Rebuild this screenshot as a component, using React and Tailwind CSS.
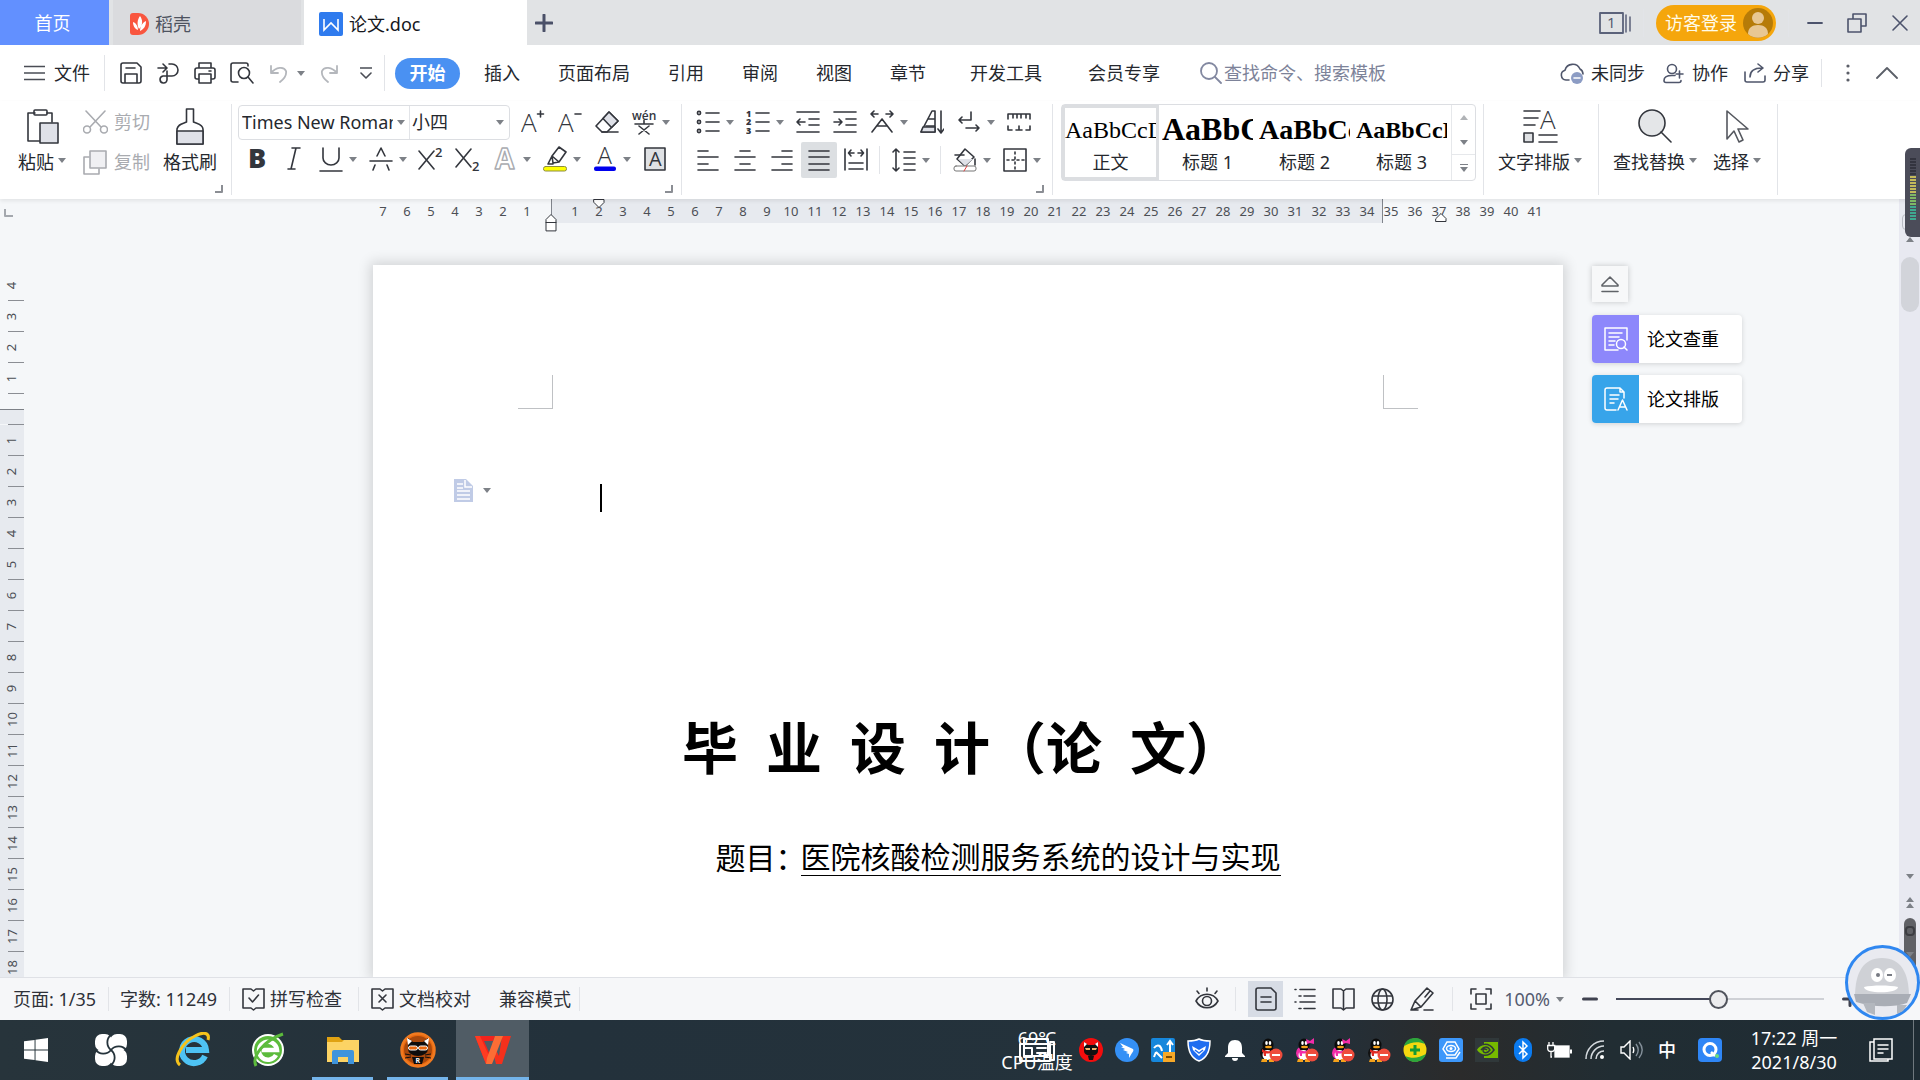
import React from "react";

const INK = "#33363d";

function Svg({ w = 24, h = 24, vb, className = "", children, stroke = INK, sw = 1.6 }) {
  return (
    <svg
      width={w}
      height={h}
      viewBox={vb || `0 0 ${w} ${h}`}
      fill="none"
      stroke={stroke}
      strokeWidth={sw}
      strokeLinecap="round"
      strokeLinejoin="round"
      className={`shrink-0 ${className}`}
      aria-hidden="true"
    >
      {children}
    </svg>
  );
}

function T({ x, y, size = 24, weight = 300, fill = INK, children, ...rest }) {
  return (
    <text x={x} y={y} fontSize={size} fontWeight={weight} fill={fill} stroke="none" fontFamily="'Open Sans','Noto Sans CJK SC',sans-serif" {...rest}>
      {children}
    </text>
  );
}

function Caret({ className = "" }) {
  return (
    <svg width="8" height="5" viewBox="0 0 8 5" className={`shrink-0 ${className}`} aria-hidden="true">
      <path d="M0 0h8L4 5z" fill="#7d8187" />
    </svg>
  );
}

function Tool({ label, caret, active, children }) {
  return (
    <button
      type="button"
      aria-label={label}
      className={caret ? "flex h-9 w-[50px] shrink-0 items-center" : "flex h-9 w-[37px] shrink-0 items-center justify-center"}
    >
      {caret ? (
        <>
          <span className="flex w-[37px] justify-center">{children}</span>
          <Caret />
        </>
      ) : (
        <span className={active ? "flex h-9 w-9 items-center justify-center rounded-xs bg-[#dcdfe2]" : "flex"}>{children}</span>
      )}
    </button>
  );
}

function Big({ label, caret, className = "", children }) {
  return (
    <button type="button" className={`flex shrink-0 flex-col items-center ${className}`}>
      <span className="flex h-11 items-center">{children}</span>
      <span className="flex h-7 items-center gap-1 text-lg">
        {label}
        {caret && <Caret className="-mt-1" />}
      </span>
    </button>
  );
}

function Corner() {
  return (
    <Svg w={8} h={8} stroke="#8b8e94" sw={2} className="absolute right-2 bottom-0.5">
      <path d="M7 0v7H0" />
    </Svg>
  );
}

const Sep = ({ className = "" }) => <span className={`w-px shrink-0 bg-[#e2e4e8] ${className}`} />;

/* ---------- title bar ---------- */
function TitleBar() {
  return (
    <header className="flex h-[45px] shrink-0 items-stretch bg-[#e1e3e5] text-lg">
      <button type="button" className="w-[109px] bg-[#6290ff] pr-1 text-white">首页</button>
      <button type="button" className="ml-1 flex w-[188px] items-center gap-1.5 bg-[#dadbde] pt-0.5 pl-[17px] text-[#4e535f]">
        <svg width="19" height="22" viewBox="0 0 19 22" aria-hidden="true">
          <path d="M3 0h5a11 11 0 0 1 0 22H3a3 3 0 0 1-3-3V3a3 3 0 0 1 3-3z" fill="#f9563f" />
          <path d="M10 3c3 4 3 9-1 13-2-4-2-9 1-13zM3 9c3 1 5 4 5 8-3-1-5-4-5-8zM16 8c0 5-2 8-6 10 0-4 2-8 6-10z" fill="#fff" />
        </svg>
        稻壳
      </button>
      <button type="button" className="ml-[3px] flex w-[223px] items-center gap-1.5 bg-white pt-0.5 pl-[15px] text-[#16181d]">
        <svg width="24" height="24" viewBox="0 0 24 24" aria-hidden="true">
          <rect width="24" height="24" rx="2" fill="#2f7bee" />
          <path d="M5 7v11l7-7 7 7V7" fill="none" stroke="#fff" strokeWidth="1.6" />
        </svg>
        论文.doc
      </button>
      <button type="button" aria-label="新建标签" className="flex w-[34px] items-center justify-center">
        <Svg w={18} h={18} stroke="#4a5068" sw={3}><path d="M9 1v16M1 9h16" /></Svg>
      </button>
      <div className="ml-auto flex items-center">
        <button type="button" aria-label="窗口列表">
          <Svg w={32} h={22} stroke="#5b627a" sw={1.8}>
            <rect x="1" y="1" width="23" height="20" />
            <path d="M27 3v17M31 5v14" strokeWidth="1.5" />
            <T x={8} y={16} size={15} weight={400} fill="#4f566b">1</T>
          </Svg>
        </button>
        <Sep className="ml-3 h-7 bg-[#cccfd4]" />
        <button type="button" className="ml-3 flex h-9 items-center gap-1.5 rounded-full bg-[#f5a60c] pr-[3px] pl-[9px] text-[#fffbe8]">
          访客登录
          <svg width="30" height="30" viewBox="0 0 30 30" aria-hidden="true">
            <circle cx="15" cy="15" r="15" fill="#b67b08" />
            <circle cx="15" cy="10" r="6" fill="#e8c793" />
            <path d="M5 26c0-6 4-9 10-9s10 3 10 9a15 15 0 0 1-20 0z" fill="#e8c793" />
          </svg>
        </button>
        <Sep className="ml-3 h-7 bg-[#cccfd4]" />
        <button type="button" aria-label="最小化" className="ml-4 flex w-5 justify-center">
          <Svg w={16} h={16} stroke="#4c536c" sw={1.8}><path d="M1 8h14" /></Svg>
        </button>
        <button type="button" aria-label="还原" className="ml-[22px]">
          <Svg w={20} h={20} stroke="#4c536c" sw={1.6}><path d="M1 6h13v13H1zM6 6V1h13v12h-5" /></Svg>
        </button>
        <button type="button" aria-label="关闭" className="mr-[11px] ml-6">
          <Svg w={18} h={18} stroke="#4c536c" sw={1.6}><path d="M2 2l14 14M16 2L2 16" /></Svg>
        </button>
      </div>
    </header>
  );
}

/* ---------- menu row ---------- */
function MenuRow() {
  return (
    <nav className="flex h-14 shrink-0 items-center bg-white pl-6 text-lg whitespace-nowrap">
      <button type="button" className="flex items-center gap-[9px]">
        <Svg w={21} h={16} stroke="#4a4d55"><path d="M0 1.500h21M0 8h21M0 14.500h21" strokeLinecap="butt" /></Svg>
        文件
      </button>
      <Sep className="ml-3.5 h-9" />
      <div className="ml-[7px] flex items-center">
        <Tool label="保存">
          <Svg w={22} h={22}><path d="M1 3a2 2 0 0 1 2-2h14l4 4v14a2 2 0 0 1-2 2H3a2 2 0 0 1-2-2zM5 21v-9h12v9M6 6h9" /></Svg>
        </Tool>
        <Tool label="输出">
          <Svg w={22} h={22}><path d="M1 6h8M6 2l4 4-4 4M12 2h3a6 6 0 0 1 0 12H6a3.500 3.500 0 1 0 4 4V9" /></Svg>
        </Tool>
        <Tool label="打印">
          <Svg w={22} h={22}><path d="M5 6V1h12v5M5 17H3a2 2 0 0 1-2-2V8a2 2 0 0 1 2-2h16a2 2 0 0 1 2 2v7a2 2 0 0 1-2 2h-2M5 12h12v9H5zM15 9h2" /></Svg>
        </Tool>
        <Tool label="打印预览">
          <Svg w={24} h={22}><path d="M8 20H3a2 2 0 0 1-2-2V3a2 2 0 0 1 2-2h13a2 2 0 0 1 2 2v1M18 15l5 6" /><circle cx="14" cy="11" r="5.500" /></Svg>
        </Tool>
        <Tool label="撤销" caret>
          <Svg w={18} h={20} stroke="#b4b7bc" sw={1.8}><path d="M1 3v7h7M1 10C6 4 14 3 16 8c1 5-2 8-6 11" /></Svg>
        </Tool>
        <Tool label="恢复">
          <Svg w={18} h={20} stroke="#b4b7bc" sw={1.8}><path d="M17 3v7h-7M17 10C12 4 4 3 2 8c-1 5 2 8 6 11" /></Svg>
        </Tool>
        <Tool label="更多">
          <Svg w={12} h={14} stroke="#4a4d55"><path d="M0.500 2h11M1 7l5 5 5-5" /></Svg>
        </Tool>
      </div>
      <Sep className="h-9" />
      <button type="button" className="ml-2.5 h-[31px] w-[65px] rounded-full bg-[#4a91f2] font-bold text-white">开始</button>
      <div className="ml-6 flex gap-[38px] text-[#25282e]">
        <button type="button">插入</button>
        <button type="button">页面布局</button>
        <button type="button">引用</button>
        <button type="button">审阅</button>
        <button type="button">视图</button>
        <button type="button">章节</button>
        <button type="button" className="ml-1.5">开发工具</button>
        <button type="button" className="ml-2">会员专享</button>
      </div>
      <label className="ml-10 flex items-center gap-0.5">
        <Svg w={22} h={22} stroke="#8288a0" sw={1.8}><circle cx="9" cy="9" r="8" /><path d="M15 15l6 6" /></Svg>
        <input type="text" aria-label="查找命令" placeholder="查找命令、搜索模板" className="w-44 bg-transparent outline-none placeholder:text-[#7d8399] placeholder:opacity-100" />
      </label>
      <div className="ml-auto flex items-center text-[#25282e]">
        <button type="button" className="flex items-center gap-1.5">
          <Svg w={25} h={22} stroke="#4f566b">
            <path d="M9 18H6a5 5 0 0 1-1-9.800A8 8 0 0 1 20 7a6 6 0 0 1 3 5" />
            <circle cx="17" cy="16" r="6" fill="#8c9cc4" stroke="none" />
            <path d="M14 16h6" stroke="#fff" />
          </Svg>
          未同步
        </button>
        <button type="button" className="ml-[18px] flex items-center gap-2">
          <Svg w={21} h={21} stroke="#4f566b"><circle cx="9" cy="6" r="4.500" /><path d="M13 19.500H3a2 2 0 0 1-2-2c0-4 3-5 8-5h3M13 11h7M16.500 8v7M13 19.500h3c1 0 2-1 2-2" /></Svg>
          协作
        </button>
        <button type="button" className="ml-4 flex items-center gap-[7px]">
          <Svg w={22} h={20} stroke="#4f566b"><path d="M1 9v8a2 2 0 0 0 2 2h16a2 2 0 0 0 2-2v-4M6 14c0-6 4-9 12-9M14 1l5 4-5 4" /></Svg>
          分享
        </button>
        <Sep className="ml-3 h-7" />
        <button type="button" aria-label="更多选项" className="ml-6">
          <svg width="4" height="20" viewBox="0 0 4 20" fill="#5b5f68"><circle cx="2" cy="3" r="1.600" /><circle cx="2" cy="10" r="1.600" /><circle cx="2" cy="17" r="1.600" /></svg>
        </button>
        <button type="button" aria-label="折叠功能区" className="mr-[22px] ml-[26px]">
          <Svg w={22} h={12} stroke="#5b5f68" sw={1.8}><path d="M1 11L11 1l10 10" /></Svg>
        </button>
      </div>
    </nav>
  );
}

/* ---------- ribbon ---------- */
function Lines({ rows, children, w = 24 }) {
  return (
    <Svg w={w} h={24}>
      {rows.map(([a, b, y], i) => (
        <path key={i} d={`M${a} ${y}H${b}`} />
      ))}
      {children}
    </Svg>
  );
}

const styleCells = [
  { name: "标题 1", cls: "text-[32px]" },
  { name: "标题 2", cls: "text-[28px]" },
  { name: "标题 3", cls: "text-2xl" },
];

function Ribbon() {
  return (
    <section className="relative z-10 flex h-[98px] shrink-0 items-stretch bg-white pt-[3px] pb-1 text-lg whitespace-nowrap text-[#25282e] shadow-[0_2px_4px_rgba(0,0,0,0.08)]">
      <div className="relative flex w-[231px] shrink-0 pl-[18px]">
        <Big label="粘贴" caret>
          <Svg w={32} h={35} className="ml-0.5">
            <path d="M8 4H1v28h12M20 4h5v9" />
            <rect x="7" y="1" width="13" height="5" rx="1" />
            <rect x="13" y="14" width="18" height="20" fill="#dfe1e8" />
          </Svg>
        </Big>
        <div className="ml-[17px] flex flex-col text-[#a9abb0]">
          <button type="button" className="flex h-9 items-center gap-1.5">
            <Svg w={25} h={24} stroke="#a9abb0"><path d="M3 1l15 16M22 1L7 17" /><circle cx="4" cy="19.500" r="3.500" /><circle cx="21" cy="19.500" r="3.500" /></Svg>
            剪切
          </button>
          <button type="button" className="mt-0.5 flex h-10 items-center gap-1.5">
            <Svg w={25} h={25} stroke="#a9abb0"><path d="M6 7H1v17h15v-5" /><rect x="7" y="1" width="16" height="17" fill="#f0f0f3" /></Svg>
            复制
          </button>
        </div>
        <Big label="格式刷" className="ml-[13px]">
          <Svg w={28} h={37}><path d="M10.500 1h7v13c4 2 9 2 9.500 7v15H1V21c1-5 5-5 9.500-7z" /><path d="M1 23h26v13H1z" fill="#dfe1e8" /></Svg>
        </Big>
        <Corner />
      </div>
      <Sep />
      <div className="relative flex w-[449px] shrink-0 flex-col pl-1.5">
        <div className="flex items-center">
          <div className="flex h-[35px] w-[272px] items-center rounded-sm border border-[#dcdee2]">
            <select aria-label="字体" className="w-[154px] appearance-none overflow-hidden bg-transparent pl-[3px] outline-none">
              <option>Times New Roman</option>
            </select>
            <Caret className="ml-1" />
            <Sep className="ml-1 h-full" />
            <select aria-label="字号" className="ml-0.5 w-[82px] appearance-none bg-transparent outline-none">
              <option>小四</option>
            </select>
            <Caret className="ml-0.5" />
          </div>
          <div className="ml-1 flex">
            <Tool label="增大字号"><Svg w={24} h={26}><T x={0} y={23} size={26}>A</T><path d="M16.500 5h6M19.500 2v6" /></Svg></Tool>
            <Tool label="减小字号"><Svg w={24} h={26}><T x={0} y={23} size={26}>A</T><path d="M17 5h6" /></Svg></Tool>
            <Tool label="清除格式">
              <Svg w={24} h={24}><path d="M1 16L14 2l9 9-11 11H7z" /><path d="M8 8.500L14 2l9 9-6.500 6.500z" fill="#dfe1e8" /><path d="M7 22h16" /></Svg>
            </Tool>
            <Tool label="拼音指南" caret>
              <Svg w={26} h={26}><T x={1} y={11} size={12} weight={600}>wén</T><path d="M13 11.500v3M4 15h18M8 17l10 8M18 17L8 25" /></Svg>
            </Tool>
          </div>
        </div>
        <div className="mt-px flex">
          <Tool label="加粗"><Svg w={20} h={24}><T x={1} y={21} size={27} weight={800}>B</T></Svg></Tool>
          <Tool label="倾斜"><Svg w={20} h={24}><path d="M8 1h8M4 22h7M12 1L7 22" /></Svg></Tool>
          <Tool label="下划线" caret><Svg w={24} h={25}><path d="M4 1v10a8 7 0 0 0 16 0V1M1 24h22" /></Svg></Tool>
          <Tool label="删除线" caret><Svg w={24} h={25}><path d="M8 9l4-8 4 8M1 14h22M6 18l-2 5M18 18l2 5" /></Svg></Tool>
          <Tool label="上标"><Svg w={26} h={24}><path d="M1 4l15 18M16 4L1 22" /><T x={17} y={10} size={13} weight={600}>2</T></Svg></Tool>
          <Tool label="下标"><Svg w={26} h={24}><path d="M1 2l15 18M16 2L1 20" /><T x={17} y={24} size={13} weight={600}>2</T></Svg></Tool>
          <Tool label="文字效果" caret>
            <Svg w={22} h={24}>
              <text x="1" y="22" fontSize="28" fontWeight="700" fontFamily="'Open Sans',sans-serif" fill="#fff" stroke="#a9abb0" strokeWidth="1.400">A</text>
            </Svg>
          </Tool>
          <Tool label="突出显示" caret>
            <Svg w={24} h={26}><path d="M9 10l7-9 7 5-7 10-6 1zM9 10l-4 8h5M9 10l7 6" /><rect x="0.500" y="20.500" width="23" height="4.500" rx="2" fill="#ffff00" stroke="#8c8c40" strokeWidth="1" /></Svg>
          </Tool>
          <Tool label="字体颜色" caret>
            <Svg w={24} h={26}><T x={4.500} y={18} size={24}>A</T><rect x="1" y="20.500" width="22" height="4.500" rx="2" fill="#0000ee" stroke="none" /></Svg>
          </Tool>
          <Tool label="字符底纹"><Svg w={22} h={24}><rect x="1" y="1" width="20" height="22" fill="#dfe1e4" /><T x={5} y={19} size={20} weight={400}>A</T></Svg></Tool>
        </div>
        <Corner />
      </div>
      <Sep />
      <div className="relative flex w-[370px] shrink-0 flex-col pl-[7px]">
        <div className="flex">
          <Tool label="项目符号" caret>
            <Lines rows={[[10, 23, 3], [10, 23, 12], [10, 23, 21]]}><circle cx="3" cy="3" r="1.600" /><circle cx="3" cy="12" r="1.600" /><circle cx="3" cy="21" r="1.600" /></Lines>
          </Tool>
          <Tool label="编号" caret>
            <Lines rows={[[10, 23, 3], [10, 23, 12], [10, 23, 21]]}><T x={0} y={7} size={9} weight={800}>1</T><T x={0} y={15} size={9} weight={800}>2</T><T x={0} y={24} size={9} weight={800}>3</T></Lines>
          </Tool>
          <Tool label="减少缩进"><Lines rows={[[1, 23, 2], [13, 23, 9], [13, 23, 15], [1, 23, 22]]}><path d="M1 12h8M4 9l-3 3 3 3" /></Lines></Tool>
          <Tool label="增加缩进"><Lines rows={[[1, 23, 2], [13, 23, 9], [13, 23, 15], [1, 23, 22]]}><path d="M1 12h8M6 9l3 3-3 3" /></Lines></Tool>
          <Tool label="中文版式" caret><Svg w={26} h={24}><path d="M3 22L13 9l10 13M8 16h10M2 4h7M5 1L2 4l3 3M24 4h-7M21 1l3 3-3 3" /></Svg></Tool>
          <Tool label="排序"><Svg w={24} h={24}><path d="M1 22L12 1h3v21zM6 16h9M8 9h7" /><path d="M3 17h12v5H1z" fill="#dfe1e8" /><path d="M21 1v21M18 19l3 4 3-4" /></Svg></Tool>
          <Tool label="显示标记" caret><Svg w={22} h={22}><path d="M13 1v8H1M4 6L1 9l3 3M8 17h13M18 14l3 3-3 3" /></Svg></Tool>
          <Tool label="标尺"><Svg w={24} h={18}><path d="M1 6V1h22v5M6 1v4M10 1v4M14 1v4M19 1v4M1 13v4h4M23 13v4h-4M9 17h6M12 13v4" /></Svg></Tool>
        </div>
        <div className="mt-0.5 flex items-center">
          <Tool label="左对齐"><Lines rows={[[2, 12, 3], [2, 22, 9], [2, 12, 16], [2, 22, 22]]} /></Tool>
          <Tool label="居中"><Lines rows={[[7, 17, 3], [2, 22, 9], [7, 17, 16], [2, 22, 22]]} /></Tool>
          <Tool label="右对齐"><Lines rows={[[12, 22, 3], [2, 22, 9], [12, 22, 16], [2, 22, 22]]} /></Tool>
          <Tool label="两端对齐" active><Lines rows={[[2, 22, 3], [2, 22, 9], [2, 22, 16], [2, 22, 22]]} /></Tool>
          <Tool label="分散对齐"><Lines rows={[[5, 19, 15], [5, 19, 21]]}><path d="M1 1v21M23 1v21M5 5h5M7 2L4.500 5 7 8M19 5h-5M17 2l2.500 3L17 8" /></Lines></Tool>
          <Sep className="mx-[5px] h-7" />
          <Tool label="行距" caret><Lines rows={[[12, 23, 4], [12, 23, 10], [12, 23, 16], [12, 23, 22]]}><path d="M4 1v22M1 4l3-3 3 3M1 20l3 3 3-3" /></Lines></Tool>
          <Sep className="mx-[5px] h-7" />
          <Tool label="底纹颜色" caret>
            <Svg w={24} h={24}><path d="M4 11L12 1l9 8-9 9z" /><path d="M5 11h15l-8 7z" fill="#dfe1e8" stroke="none" /><path d="M2 7h9M22 11v6" /><rect x="1" y="18" width="22" height="5" rx="2" fill="#fff" stroke="#777" strokeWidth="1" /><path d="M11 23l3-5" stroke="#e04040" strokeWidth="1" /></Svg>
          </Tool>
          <Tool label="边框" caret><Svg w={24} h={24}><rect x="1" y="1" width="22" height="22" /><path d="M12 4v17M4 12h17" strokeDasharray="2 3" /></Svg></Tool>
        </div>
        <Corner />
      </div>
      <Sep />
      <div className="ml-2 flex h-[77px] w-[415px] shrink-0 rounded-sm border border-[#dcdee2]">
        <button type="button" className="flex w-[97px] flex-col items-center overflow-hidden border-[3px] border-[#dcdee1]">
          <span className="flex h-11 w-full items-center overflow-hidden font-['Liberation_Serif'] text-2xl text-black">AaBbCcDd</span>
          <span className="-mt-1 text-lg">正文</span>
        </button>
        {styleCells.map((s) => (
          <button type="button" key={s.name} className="flex w-[97px] flex-col items-center px-[3px] pt-[3px]">
            <span className={`flex h-11 w-full items-center overflow-hidden font-['Liberation_Serif'] font-bold text-black ${s.cls}`}>AaBbCcDd</span>
            <span className="-mt-1 text-lg">{s.name}</span>
          </button>
        ))}
        <div className="ml-auto flex w-6 flex-col border-l border-[#e6e8eb]">
          <button type="button" aria-label="上一行" className="flex flex-1 items-center justify-center"><Caret className="rotate-180 opacity-60" /></button>
          <button type="button" aria-label="下一行" className="flex flex-1 items-center justify-center"><Caret /></button>
          <button type="button" aria-label="更多样式" className="flex flex-1 flex-col items-center justify-center gap-0.5 border-t border-[#e6e8eb]">
            <span className="h-px w-2 bg-[#7d8187]" />
            <Caret />
          </button>
        </div>
      </div>
      <Sep className="ml-[7px]" />
      <Big label="文字排版" caret className="ml-3.5">
        <Svg w={35} h={34}><path d="M1 2h16M1 9h14M1 16h11M16 26h18M16 33h18" /><path d="M1 24h9v9H1z" fill="#dfe1e4" /><T x={17} y={20} size={26}>A</T></Svg>
      </Big>
      <Sep className="ml-4" />
      <Big label="查找替换" caret className="ml-3.5">
        <Svg w={34} h={34}><circle cx="14" cy="14" r="13" fill="#e4e6e8" /><path d="M23 23l10 10" /></Svg>
      </Big>
      <Big label="选择" caret className="ml-4">
        <Svg w={24} h={34} stroke="#55585f"><path d="M2 2v28l7-8 5 11 4-2-5-11h10z" /></Svg>
      </Big>
      <Sep className="ml-4" />
    </section>
  );
}

/* ---------- rulers ---------- */
const hMarks = Array.from({ length: 49 }, (_, i) => i - 7);
const vMarks = [4, 3, 2, 1, 0, ...Array.from({ length: 18 }, (_, i) => i + 1)];

function HRuler() {
  return (
    <div className="flex h-[45px] shrink-0 items-start pr-[21px] pl-1">
      <Svg w={9} h={9} stroke="#a4a8ae" sw={2} className="mt-2.5"><path d="M1 0v7h8" /></Svg>
      <div className="flex flex-1 justify-center pl-1.5">
        <div className="relative flex h-6">
          <div className="absolute inset-y-0 left-[180px] w-[832px] border-x border-[#80848c] bg-[#e7eaef]" />
          {hMarks.map((n) => (
            <span key={n} className="relative flex w-6 items-center justify-center pt-0.5 text-[13px] text-[#4c4f55]">{n === 0 ? "" : Math.abs(n)}</span>
          ))}
          <Svg w={12} h={18} sw={1} stroke="#33363d" className="absolute top-[15px] left-[174px]"><path d="M1 16.500v-11l5-5 5 5v11zM1 8.500h10" fill="#fff" /></Svg>
          <Svg w={12} h={10} sw={1} stroke="#33363d" className="absolute top-0 left-[222px]"><path d="M1 0.500h10v3l-5 5-5-5z" fill="#fff" /></Svg>
          <Svg w={12} h={10} sw={1} stroke="#33363d" className="absolute top-[14px] left-[1064px]"><path d="M1 8.500h10v-3l-5-5-5 5z" fill="#fff" /></Svg>
        </div>
      </div>
    </div>
  );
}

function VRuler() {
  return (
    <div className="w-6 overflow-hidden pt-[26px]">
      {vMarks.map((n, i) => (
        <div key={i} className={i > 4 ? "flex h-[31px] flex-col items-end bg-[#e7eaef]" : "flex h-[31px] flex-col items-end"}>
          {n === 0 ? (
            <span className="mt-[15px] h-[15px] w-full border-t border-[#7d8187] bg-[#e7eaef]" />
          ) : (
            <span className="flex h-[30px] w-6 items-center justify-center">
              <span className="-rotate-90 text-[13px] leading-none text-[#4c4f55]">{n}</span>
            </span>
          )}
          <span className="h-px w-4 shrink-0 bg-[#8b8e94]" />
        </div>
      ))}
    </div>
  );
}

/* ---------- document ---------- */
function Document() {
  return (
    <article className="mt-[21px] overflow-hidden bg-white text-black shadow-[0_0_12px_3px_rgba(0,0,0,0.14)]">
      <div className="flex justify-between px-[145px] pt-[110px]">
        <span className="h-[34px] w-[35px] border-r border-b border-[#bfc1c4]" />
        <span className="h-[34px] w-[35px] border-b border-l border-[#bfc1c4]" />
      </div>
      <div className="mt-[63px] flex h-9 items-center pl-[81px]">
        <button type="button" aria-label="段落选项" className="flex items-center gap-2.5">
          <svg width="19" height="23" viewBox="0 0 19 23" aria-hidden="true">
            <path d="M0 0h12l7 7v16H0z" fill="#c0cbe6" />
            <path d="M3 5h6M3 9h6M3 12h13M3 16h13M3 20h13M11 1v7h7" stroke="#fff" strokeWidth="1.500" fill="none" />
          </svg>
          <Caret />
        </button>
        <span className="mt-4 ml-[109px] h-7 w-0.5 bg-black" />
      </div>
      <h1 className="mt-[197px] flex justify-center gap-7 pr-3 text-[56px] leading-[84px] font-bold">
        <span>毕</span>
        <span>业</span>
        <span>设</span>
        <span>计（论</span>
        <span>文）</span>
      </h1>
      <p className="mt-[51px] flex justify-center pb-40 pl-[60px] text-[30px] leading-9">
        <span>题目</span>
        <span className="w-[25px]">：</span>
        <span className="h-[36px] border-b border-black leading-[34px]">医院核酸检测服务系统的设计与实现</span>
      </p>
    </article>
  );
}

function SideTools() {
  return (
    <aside className="flex flex-col items-start pt-[22px] pl-[29px] text-lg text-black">
      <button type="button" aria-label="收起" className="flex h-9 w-9 items-center justify-center bg-[#f7f8f9] shadow-[0_0_6px_rgba(0,0,0,0.2)]">
        <Svg w={18} h={18} stroke="#606368"><path d="M1 10l8-8 8 8v1H1zM1 16.500h16" /></Svg>
      </button>
      <button type="button" className="mt-[13px] flex h-12 w-[150px] items-center overflow-hidden rounded bg-white shadow-[0_1px_5px_rgba(0,0,0,0.15)]">
        <span className="flex h-full w-[47px] items-center justify-center bg-[#8d87fb]">
          <Svg w={24} h={24} stroke="#fff" sw={1.5}><path d="M14 23H1V1h22v12M5 6h13M5 10h10M5 14h6M5 18h5M20 20l3 3" /><circle cx="17" cy="17" r="4.500" /></Svg>
        </span>
        <span className="pl-2">论文查重</span>
      </button>
      <button type="button" className="mt-3 flex h-12 w-[150px] items-center overflow-hidden rounded bg-white shadow-[0_1px_5px_rgba(0,0,0,0.15)]">
        <span className="flex h-full w-[47px] items-center justify-center bg-[#37a4ea]">
          <Svg w={24} h={24} stroke="#fff" sw={1.5}><path d="M12 23H3a2 2 0 0 1-2-2V3a2 2 0 0 1 2-2h13l4 4v6M16 1v4h4M6 8h9M6 12h8M6 16h4" /><path d="M14 23l4.500-10L23 23M15.500 20h6" /></Svg>
        </span>
        <span className="pl-2">论文排版</span>
      </button>
    </aside>
  );
}

function ScrollBar() {
  return (
    <div className="-mt-[45px] flex flex-col items-center bg-[#e8e9f1]">
      <span className="mt-[15px] h-4 w-4 rounded-sm border border-[#b9bcc4]" />
      <Caret className="mt-[7px] rotate-180" />
      <span className="mt-[15px] h-[55px] w-[18px] rounded-full bg-[#d2d4da]" />
      <Caret className="mt-auto" />
      <Caret className="mt-[18px] rotate-180" />
      <Caret className="mt-px rotate-180" />
      <span className="mt-2.5 flex h-[59px] w-3 flex-col items-center rounded-t-md bg-[#606166] pt-2">
        <span className="h-2.5 w-2.5 rounded-sm border-2 border-[#3c3d42]" />
        <Caret className="mt-4" />
      </span>
    </div>
  );
}

/* ---------- status bar ---------- */
const bookPath = "M1 1h8l2.500 2L14 1h8v19h-8l-2.500 2L9 20H1z";

function StatusBar() {
  return (
    <footer className="flex h-[43px] shrink-0 items-center border-t border-[#dfe1e6] bg-[#f6f7f9] pl-[13px] text-lg whitespace-nowrap text-[#2e3138]">
      <button type="button" className="w-[95px] text-left">页面: 1/35</button>
      <Sep className="h-6" />
      <button type="button" className="ml-[11px] w-[109px] text-left">字数: 11249</button>
      <Sep className="h-6" />
      <button type="button" className="ml-3 flex items-center gap-[5px]">
        <Svg w={23} h={23}><path d={bookPath} /><path d="M7 10l3.500 4 6-7" /></Svg>
        拼写检查
      </button>
      <Sep className="ml-4 h-6" />
      <button type="button" className="ml-3 flex items-center gap-[5px]">
        <Svg w={23} h={23}><path d={bookPath} /><path d="M8 7l7 7M15 7l-7 7" /></Svg>
        文档校对
      </button>
      <button type="button" className="ml-7">兼容模式</button>
      <Sep className="ml-2 h-6" />
      <div className="ml-auto flex items-center">
        <button type="button" aria-label="护眼模式" className="mr-4">
          <Svg w={24} h={24}><path d="M1 14c5-9 17-9 22 0-5 9-17 9-22 0zM2 4l2 2.500M12 1v3M22 4l-2 2.500" /><circle cx="12" cy="14" r="4.500" /></Svg>
        </button>
        <Sep className="mr-3 h-6" />
        <button type="button" aria-label="页面视图" className="flex h-9 w-[35px] items-center justify-center bg-[#d7dce5]">
          <Svg w={22} h={24}><path d="M1 3a2 2 0 0 1 2-2h13l5 5v15a2 2 0 0 1-2 2H3a2 2 0 0 1-2-2zM6 10h10M6 15h10" /></Svg>
        </button>
        <button type="button" aria-label="大纲" className="ml-[11px]">
          <Svg w={22} h={22}><path d="M1 1.500h1M6 1.500h15M5 8h2M10 8h11M1 14h1M6 14h15M5 20.500h2M10 20.500h11" /></Svg>
        </button>
        <button type="button" aria-label="阅读版式" className="ml-4">
          <Svg w={23} h={23}><path d={`${bookPath}M11.500 3v18`} /></Svg>
        </button>
        <button type="button" aria-label="Web版式" className="ml-4">
          <Svg w={23} h={23}><circle cx="11.500" cy="11.500" r="10.500" /><ellipse cx="11.500" cy="11.500" rx="4.500" ry="10.500" /><path d="M2 8h19M2 15h19" /></Svg>
        </button>
        <button type="button" aria-label="写作模式" className="ml-4">
          <Svg w={25} h={25}><path d="M1 23l4-9L17 1l6 5-12 14zM5 14l6 6M15 10l5-6M14 23h9M1 23h7" /></Svg>
        </button>
        <Sep className="ml-[17px] h-6" />
        <button type="button" aria-label="适合页面" className="ml-[17px]">
          <Svg w={22} h={22}><path d="M1 6V1h5M16 1h5v5M21 16v5h-5M6 21H1v-5" /><path d="M6 6h10v10H6z" /></Svg>
        </button>
        <button type="button" className="ml-3 flex items-center gap-1.5 text-[#555b70]">100%<Caret /></button>
        <button type="button" aria-label="缩小" className="ml-[18px]"><Svg w={16} h={16} sw={3} stroke="#3f4250"><path d="M1.500 8h13" /></Svg></button>
        <input
          type="range"
          aria-label="缩放比例"
          defaultValue="49"
          className="mx-[18px] h-0.5 w-[208px] appearance-none bg-[linear-gradient(to_right,#44485a_49%,#cfd1d6_49%)] [&::-webkit-slider-thumb]:h-[19px] [&::-webkit-slider-thumb]:w-[19px] [&::-webkit-slider-thumb]:appearance-none [&::-webkit-slider-thumb]:rounded-full [&::-webkit-slider-thumb]:border-2 [&::-webkit-slider-thumb]:border-[#50535c] [&::-webkit-slider-thumb]:bg-[#ececee]"
        />
        <button type="button" aria-label="放大" className="mr-[62px]"><Svg w={16} h={16} sw={3} stroke="#3f4250"><path d="M1.500 8h13M8 1.500v13" /></Svg></button>
      </div>
    </footer>
  );
}

/* ---------- taskbar ---------- */
function TaskItem({ label, state, children }) {
  const bar = state === "active" ? "w-[73px]" : "w-[61px]";
  return (
    <button
      type="button"
      aria-label={label}
      className={state === "active" ? "relative flex h-full w-[75px] items-center justify-center border-x border-transparent bg-[#505c65] bg-clip-padding" : "relative flex h-full w-[75px] items-center justify-center"}
    >
      {children}
      {state && <span className={`absolute bottom-0 h-[3px] bg-[#74b4ea] ${bar}`} />}
    </button>
  );
}

const Tray = ({ label, children }) => (
  <button type="button" aria-label={label} className="flex w-9 justify-center">{children}</button>
);

function Penguin({ scarf, bow }) {
  return (
    <svg width="24" height="24" viewBox="0 0 24 24" aria-hidden="true">
      <ellipse cx="8.500" cy="15" rx="7.500" ry="7" fill={bow ? "#f22ca8" : "#111"} />
      <ellipse cx="9" cy="7" rx="5.500" ry="6.500" fill="#0b0b0b" />
      <ellipse cx="8.500" cy="17" rx="5" ry="5" fill="#fff" />
      <ellipse cx="7.500" cy="5" rx="1.300" ry="2" fill="#fff" />
      <ellipse cx="11" cy="5" rx="1.300" ry="2" fill="#fff" />
      <ellipse cx="9.500" cy="9" rx="3.500" ry="1.300" fill="#f6a21a" />
      <path d="M3 11c4 3 9 3 12 0v3c-4 2-8 2-12 0zM4 13h3v5H5z" fill={scarf} />
      <path d="M3 21h5v3H2zM10 21h5v3h-5z" fill="#f6a21a" />
      {bow && <path d="M11 1l4 2 4-3v6l-4-1-3 1z" fill="#f22ca8" />}
      <circle cx="17" cy="17" r="6.500" fill="#ee4c3c" />
      <rect x="13" y="16" width="8" height="2" fill="#fff" />
    </svg>
  );
}

function Taskbar() {
  return (
    <div className="flex h-[60px] shrink-0 items-center bg-[linear-gradient(to_right,#27343b,#23313b_30%,#24323b_60%,#22303b_68%,#2b2b2b_76%,#212d33_84%,#1f2c34)] text-lg text-white">
      <TaskItem label="开始菜单">
        <svg width="24" height="24" viewBox="0 0 25 25" fill="#fff" className="mr-1" aria-hidden="true"><path d="M0 3.500l11-1.500v10H0zM12 1.800L25 0v12H12zM0 13h11v10L0 21.500zM12 13h13v12l-13-1.800z" /></svg>
      </TaskItem>
      <TaskItem label="应用中心">
        <svg width="32" height="32" viewBox="0 0 32 32" className="mr-1" aria-hidden="true">
          <g fill="#fff">
            <rect x="0" y="0" width="17" height="17" rx="7" />
            <rect x="15" y="0" width="17" height="17" rx="7" />
            <rect x="0" y="15" width="17" height="17" rx="7" />
            <rect x="15" y="15" width="17" height="17" rx="7" />
            <circle cx="16" cy="16" r="7" />
          </g>
          <g fill="none" stroke="#25333b" strokeWidth="1.800">
            <path d="M17 0c-6 4-6 12-1 16" />
            <path d="M17 0c-6 4-6 12-1 16" transform="rotate(90 16 16)" />
            <path d="M17 0c-6 4-6 12-1 16" transform="rotate(180 16 16)" />
            <path d="M17 0c-6 4-6 12-1 16" transform="rotate(270 16 16)" />
          </g>
        </svg>
      </TaskItem>
      <span className="w-[5px]" />
      <TaskItem label="Internet Explorer">
        <svg width="36" height="36" viewBox="0 0 36 36" aria-hidden="true">
          <path d="M30 24A12 12 0 1 1 31 18H11" fill="none" stroke="#4ec3f4" strokeWidth="6" />
          <path d="M5 33C-3 27 8 10 20 4c9-5 15-3 13 4" fill="none" stroke="#f5c21b" strokeWidth="3" />
        </svg>
      </TaskItem>
      <TaskItem label="360浏览器">
        <svg width="34" height="36" viewBox="0 0 34 36" aria-hidden="true">
          <circle cx="17" cy="18" r="16" fill="#fff" />
          <circle cx="17" cy="18" r="14" fill="#5cbb3c" />
          <path d="M25 23a9 9 0 1 1 1-5H11" fill="none" stroke="#fff" strokeWidth="4.500" />
          <path d="M5 34C0 24 14 8 32 2" fill="none" stroke="#5cbb3c" strokeWidth="3" />
        </svg>
      </TaskItem>
      <TaskItem label="文件资源管理器" state="open">
        <svg width="34" height="28" viewBox="0 0 34 28" aria-hidden="true">
          <path d="M1 1h12l3 3h17v8H1z" fill="#e0a212" />
          <path d="M1 6h15l2-2h15v22H1z" fill="#fcd364" />
          <path d="M6 28V16a2 2 0 0 1 2-2h18a2 2 0 0 1 2 2v12h-6v-7H12v7z" fill="#3f94dc" />
        </svg>
      </TaskItem>
      <TaskItem label="猫咪应用" state="open">
        <svg width="36" height="36" viewBox="0 0 36 36" aria-hidden="true">
          <circle cx="18" cy="18" r="16.500" fill="#e8670e" stroke="#f07a20" strokeWidth="2.500" />
          <circle cx="18" cy="18" r="14" fill="#a8480c" />
          <path d="M8 6l5 4h10l5-4v11a10 7 0 0 1-20 0z" fill="#0d0d0d" />
          <path d="M7 6l5 3-4 4zM29 6l-5 3 4 4z" fill="#fff" />
          <path d="M12 25h12l-2 7h-8z" fill="#0d0d0d" />
          <path d="M5 22l6 1M5 26l6-1M31 22l-6 1M31 26l-6-1" stroke="#0d0d0d" />
          <rect x="8.500" y="14" width="9" height="4" rx="2" fill="#e8670e" stroke="#fff" />
          <rect x="18.500" y="14" width="9" height="4" rx="2" fill="#e8670e" stroke="#fff" />
          <text x="15.500" y="31" fontSize="7" fontWeight="700" fill="#fff">R</text>
        </svg>
      </TaskItem>
      <TaskItem label="WPS Office" state="active">
        <svg width="36" height="28" viewBox="0 0 36 28" aria-hidden="true">
          <path d="M0 0h20l-2 5H9l7 16-1 7h-4z" fill="#f4231c" />
          <path d="M0 0h5l10 22-1 6h-3z" fill="#ff3b22" />
          <path d="M27 0h9l-9 28h-6l-2-8 2-6 3 6z" fill="#f5301c" />
          <path d="M20 0h8l-11 28h-6l1-6z" fill="#fc6d35" />
        </svg>
      </TaskItem>
      <div className="ml-auto flex h-full items-center">
        <button type="button" className="relative flex w-[72px] flex-col items-center leading-6 whitespace-nowrap">
          <span>69℃</span>
          <span>CPU温度</span>
          <Svg w={36} h={24} stroke="#fff" sw={2} className="absolute top-3 left-[18px]"><path d="M5 1h24v17H5zM1 6h30v17H1zM5 10h8v9H5zM18 10h9M18 15h9M31 4h4v18h-4" /></Svg>
        </button>
        <Tray label="猫咪应用"><svg width="24" height="24" viewBox="0 0 24 24"><circle cx="12" cy="12" r="12" fill="#f30d0d" /><path d="M5 4l4 3h6l4-3v9a7 5 0 0 1-14 0z" fill="#111" /><path d="M5 4l3 2-3 3zM19 4l-3 2 3 3z" fill="#fff" /><path d="M6 10h5v2H7zM13 10h5l-1 2h-4z" fill="#f5b16b" /><path d="M9 18h6l-1 4h-4z" fill="#111" /></svg></Tray>
        <Tray label="钉钉"><svg width="24" height="24" viewBox="0 0 24 24"><circle cx="12" cy="12" r="12" fill="#3490f6" /><path d="M5 5l13 6c1 1 0 3-1 4l-3 5 0-4-3-1 2-1-5-2 2-1-4-2 2 0z" fill="#fff" /></svg></Tray>
        <Tray label="图表工具"><svg width="24" height="24" viewBox="0 0 24 24"><rect width="24" height="24" rx="2" fill="#1687dc" /><path d="M3 10c4-5 7-2 8 3M19 14V4M16 7l3-4 3 4M5 14l6 6M5 14l-2 5" stroke="#fff" strokeWidth="2" fill="none" /><rect x="12" y="14" width="12" height="10" fill="#f7a928" /><rect x="15" y="18" width="6" height="2" fill="#7a4a00" /></svg></Tray>
        <Tray label="电脑管家"><svg width="24" height="24" viewBox="0 0 24 24"><path d="M12 1c4 2 7 2 11 2 0 10-3 17-11 20C4 20 1 13 1 3c4 0 7 0 11-2z" fill="#1f6df0" stroke="#fff" strokeWidth="1.500" /><path d="M5 8l7 4 7-4-1 4-6 6-6-6z" fill="#fff" /><path d="M8 12l4 3 4-3" stroke="#1f6df0" strokeWidth="1.500" fill="none" /></svg></Tray>
        <Tray label="通知"><svg width="22" height="22" viewBox="0 0 22 22" fill="#fff"><path d="M11 1c5 0 7 3 7 8v5l3 3v1H1v-1l3-3V9c0-5 2-8 7-8zM8 19h6a3 3 0 0 1-6 0z" /></svg></Tray>
        <Tray label="QQ"><Penguin scarf="#e02a22" /></Tray>
        <Tray label="QQ"><Penguin scarf="#f22ca8" bow /></Tray>
        <Tray label="QQ"><Penguin scarf="#f22ca8" bow /></Tray>
        <Tray label="QQ"><Penguin scarf="#e02a22" /></Tray>
        <Tray label="360安全"><svg width="24" height="24" viewBox="0 0 24 24"><circle cx="12" cy="12" r="11.500" fill="#f5d80f" /><path d="M1 8A11.500 11.500 0 0 1 22 6C15 3 8 4 1 8zM23 16a11.500 11.500 0 0 1-21 2c7 3 14 2 21-2z" fill="#2ca63c" /><path d="M12 7v10M7 12h10" stroke="#159a35" strokeWidth="3" /></svg></Tray>
        <Tray label="设备中心"><svg width="24" height="24" viewBox="0 0 24 24"><rect width="24" height="24" rx="3" fill="#3d97fa" /><path d="M8 4h8l4 7-4 6H8l-4-6zM7 20h10l4-6" stroke="#fff" strokeWidth="1.500" fill="none" /><ellipse cx="12" cy="10.500" rx="4.500" ry="3" stroke="#fff" strokeWidth="1.500" fill="none" /><circle cx="12" cy="10.500" r="1.500" fill="#fff" /></svg></Tray>
        <Tray label="NVIDIA"><svg width="24" height="24" viewBox="0 0 24 24"><rect width="24" height="24" fill="#30383a" /><path d="M9 4h14v16H9z" fill="#76b900" /><path d="M1 12c4-7 13-8 18 0-5 7-13 7-18 0z" fill="#76b900" stroke="#30383a" strokeWidth="1.500" /><path d="M6 12c3-4 7-4 9 0-3 4-6 3-7 1 0-2 2-3 4-1" stroke="#30383a" strokeWidth="1.500" fill="none" /></svg></Tray>
        <Tray label="蓝牙"><svg width="18" height="24" viewBox="0 0 18 24"><rect width="18" height="24" rx="9" fill="#0b7bf0" /><path d="M5 8l8 8-4 4V4l4 4-8 8" stroke="#fff" strokeWidth="1.500" fill="none" /></svg></Tray>
        <Tray label="电源"><svg width="25" height="18" viewBox="0 0 25 18" fill="none" stroke="#fff" strokeWidth="1.300"><path d="M2 1v3M6 1v3M0.700 4.500h7v3c0 2-1 3-3.500 3s-3.500-1-3.500-3zM4 11v5h1" /><rect x="8" y="5" width="14" height="11" fill="#fff" /><path d="M24 8.500v4" strokeWidth="2" /></svg></Tray>
        <Tray label="网络"><svg width="20" height="20" viewBox="0 0 20 20" fill="none" stroke="#d5dade" strokeWidth="1.500"><path d="M1 19C1 9 9 1 19 1M6 19C6 12 12 6 19 6M11 19c0-5 4-8 8-8" /><circle cx="17" cy="17" r="2" fill="#fff" stroke="none" /></svg></Tray>
        <Tray label="音量"><svg width="23" height="20" viewBox="0 0 23 20" fill="none" stroke="#fff" strokeWidth="1.400"><path d="M1 7h3l6-6v18l-6-6H1zM13 7c1 2 1 4 0 6" /><path d="M16 4c3 4 3 8 0 12M19 2c4 5 4 11 0 16" stroke="#84909a" /></svg></Tray>
        <button type="button" className="flex w-9 justify-center font-medium">中</button>
        <button type="button" aria-label="浏览器" className="ml-[13px]"><svg width="24" height="24" viewBox="0 0 24 24"><rect width="24" height="24" rx="4" fill="#2f86f6" /><circle cx="12" cy="11.500" r="6" stroke="#fff" strokeWidth="3" fill="none" /><path d="M13 14l4 4" stroke="#fff" strokeWidth="2.500" /><circle cx="19" cy="18" r="2" fill="#6fdc7c" /></svg></button>
        <button type="button" className="ml-[22px] flex w-[100px] flex-col items-center leading-6 whitespace-nowrap">
          <span>17:22 周一</span>
          <span>2021/8/30</span>
        </button>
        <button type="button" aria-label="操作中心" className="ml-[25px]">
          <Svg w={24} h={24} stroke="#fff" sw={1.5}><path d="M5 1h18v20H5zM5 4H1v19h18v-2M9 7h10M9 11h10M9 15h5" strokeLinejoin="miter" /></Svg>
        </button>
        <span className="mr-1.5 ml-5 h-full w-px bg-[#6f787e]" />
      </div>
    </div>
  );
}

/* ---------- floating widgets ---------- */
function Meter() {
  const bars = Array.from({ length: 21 }, (_, i) => i);
  return (
    <div className="absolute top-[148px] right-0 z-20 flex h-[89px] w-[15px] flex-col items-center gap-px rounded-l-md bg-[#4b4c59] pt-2.5">
      {bars.map((i) => (
        <span key={i} className={i < 6 ? "h-0.5 w-1.5 bg-[#33343f]" : i < 12 ? "h-0.5 w-1.5 bg-[#c3b95a]" : i < 16 ? "h-0.5 w-1.5 bg-[#7fb765]" : "h-0.5 w-1.5 bg-[#3fa890]"} />
      ))}
    </div>
  );
}

function Robot() {
  return (
    <button type="button" aria-label="助手" className="absolute right-0 bottom-[60px] z-20">
      <svg width="75" height="75" viewBox="0 0 75 75" aria-hidden="true">
        <circle cx="37.500" cy="37.500" r="36" fill="#e9eaf0" stroke="#2f87f0" strokeWidth="3" />
        <path d="M10 52c0-24 8-39 27-39s27 15 27 39z" fill="#cfd1d6" />
        <path d="M9 49h57l-4 9c-14 5-36 4-51-1z" fill="#a9adb5" />
        <path d="M18 58h12v12l-8-3zM52 60h10l-4 6-6 3z" fill="#b3b7be" />
        <ellipse cx="32" cy="30" rx="6" ry="7" fill="#fff" />
        <ellipse cx="45" cy="30" rx="6" ry="7" fill="#fff" />
        <circle cx="33" cy="30" r="2" fill="#777a82" />
        <path d="M42 30h5" stroke="#777a82" strokeWidth="2" />
        <path d="M19 42c8-2 26-2 34 0 0 7-34 7-34 0z" fill="#fff" />
      </svg>
    </button>
  );
}

export default function App() {
  return (
    <div className="relative flex h-screen flex-col overflow-hidden bg-[#f5f7f9] font-['Noto_Sans','Noto_Sans_CJK_SC',sans-serif] font-normal text-[#25282e]">
      <TitleBar />
      <MenuRow />
      <Ribbon />
      <HRuler />
      <main className="grid min-h-0 flex-1 grid-cols-[37px_1fr_minmax(0,1190px)_1fr_21px]">
        <VRuler />
        <span />
        <Document />
        <SideTools />
        <ScrollBar />
      </main>
      <StatusBar />
      <Taskbar />
      <Meter />
      <Robot />
    </div>
  );
}
